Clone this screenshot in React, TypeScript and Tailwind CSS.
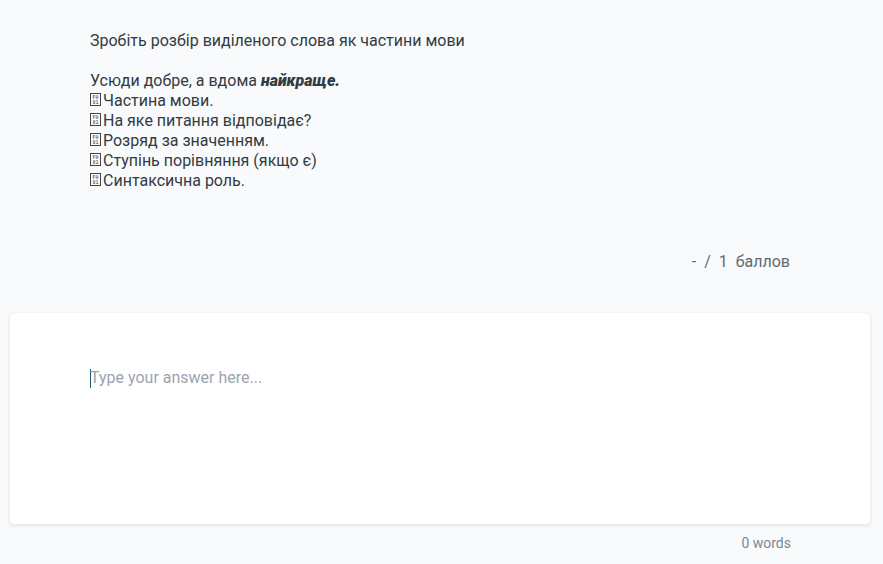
function MissingGlyph() {
  return (
    <span
      className="mr-[2px] -mt-[3px] flex h-[13px] w-[11px] shrink-0 flex-col items-center justify-center border border-[#444] text-[5px] leading-[5px] text-[#333]"
      style={{ fontFamily: '"DejaVu Sans Mono", monospace' }}
    >
      <span>F0</span>
      <span>81</span>
    </span>
  )
}

const items = [
  'Частина мови.',
  'На яке питання відповідає?',
  'Розряд за значенням.',
  'Ступінь порівняння (якщо є)',
  'Синтаксична роль.',
]

export default function App() {
  return (
    <div
      className="min-h-[564px] bg-[#f8fafc] text-[#333b42]"
      style={{ fontFamily: 'Roboto, "Noto Sans", sans-serif' }}
    >
      <div className="px-[90px] pt-[31px] text-base leading-5">
        <p>Зробіть розбір виділеного слова як частини мови</p>
        <p>&nbsp;</p>
        <p>
          Усюди добре, а вдома <strong className="font-black italic">найкраще.</strong>
        </p>
        {items.map((item) => (
          <p key={item} className="flex h-5 items-center">
            <MissingGlyph />
            <span>{item}</span>
          </p>
        ))}
      </div>

      <div className="flex justify-end pr-[93px] pt-[61px] text-base leading-5 text-[#5f6b75]">
        <span className="whitespace-pre">-  /  1  баллов</span>
      </div>

      <div className="ml-[10px] mr-[13px] mt-[41px] h-[211px] rounded bg-white px-[80px] pt-[55px] shadow-[0_1px_4px_rgba(0,0,0,0.12)]">
        <div className="flex items-center text-base leading-5 text-[#9ca3af]">
          <span className="mr-[-1px] h-[19px] w-px bg-[#0f5f6e]" />
          <span>Type your answer here...</span>
        </div>
      </div>

      <div className="flex justify-end pr-[92px] pt-[9px] text-sm leading-5 text-[#7d8891]">
        0 words
      </div>
    </div>
  )
}
